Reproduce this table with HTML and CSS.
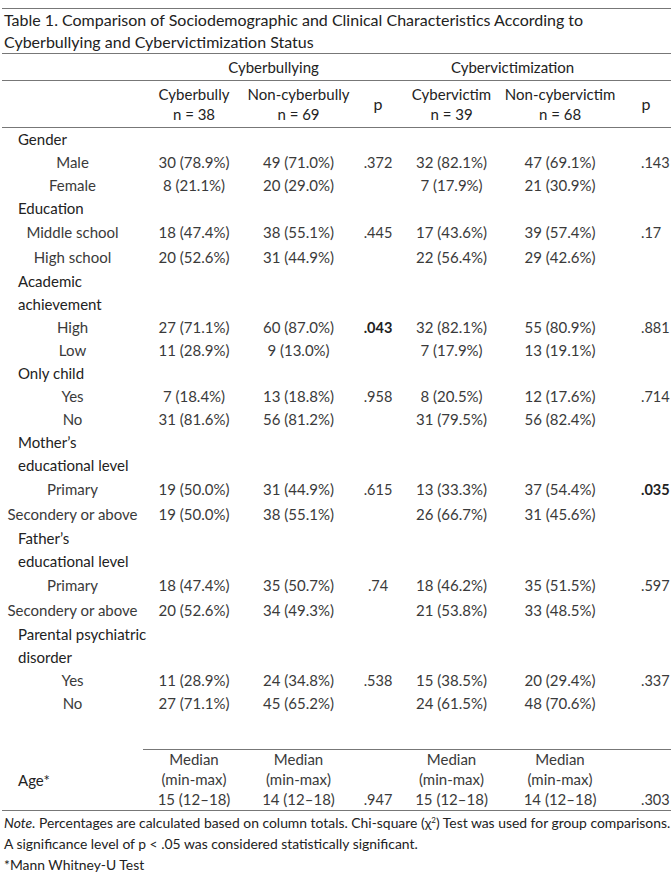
FILE: index.html
```html
<!DOCTYPE html>
<html lang="en">
<head>
    <meta charset="UTF-8">
    <meta name="viewport" content="width=device-width, initial-scale=1.0">
    <title>Table 1</title>
    <link rel="stylesheet" href="styles.css">
</head>
<body>

<div class="table-box">
    <div class="table-title">Table 1. Comparison of Sociodemographic and Clinical Characteristics According to<br>Cyberbullying and Cybervictimization Status</div>

    <table class="stats">
        <colgroup>
            <col class="c-label">
            <col class="c-g1">
            <col class="c-g2">
            <col class="c-p1">
            <col class="c-g3">
            <col class="c-g4">
            <col class="c-p2">
        </colgroup>
        <thead>
            <tr class="group-row">
                <th></th>
                <th colspan="3">Cyberbullying</th>
                <th colspan="2">Cybervictimization</th>
                <th></th>
            </tr>
            <tr class="sub-row">
                <th></th>
                <th>Cyberbully<br>n = 38</th>
                <th>Non-cyberbully<br>n = 69</th>
                <th class="p-head">p</th>
                <th>Cybervictim<br>n = 39</th>
                <th>Non-cybervictim<br>n = 68</th>
                <th class="p-head">p</th>
            </tr>
        </thead>
        <tbody>
            <tr class="cat first"><td colspan="7">Gender</td></tr>
            <tr>
                <td class="sub">Male</td>
                <td>30 (78.9%)</td><td>49 (71.0%)</td><td class="pv">.372</td>
                <td>32 (82.1%)</td><td>47 (69.1%)</td><td class="pv last">.143</td>
            </tr>
            <tr>
                <td class="sub">Female</td>
                <td>8 (21.1%)</td><td>20 (29.0%)</td><td class="pv"></td>
                <td>7 (17.9%)</td><td>21 (30.9%)</td><td class="pv last"></td>
            </tr>

            <tr class="cat"><td colspan="7">Education</td></tr>
            <tr class="tall">
                <td class="sub">Middle school</td>
                <td>18 (47.4%)</td><td>38 (55.1%)</td><td class="pv">.445</td>
                <td>17 (43.6%)</td><td>39 (57.4%)</td><td class="pv last">.17</td>
            </tr>
            <tr class="tall">
                <td class="sub">High school</td>
                <td>20 (52.6%)</td><td>31 (44.9%)</td><td class="pv"></td>
                <td>22 (56.4%)</td><td>29 (42.6%)</td><td class="pv last"></td>
            </tr>

            <tr class="cat"><td colspan="7">Academic<br>achievement</td></tr>
            <tr>
                <td class="sub">High</td>
                <td>27 (71.1%)</td><td>60 (87.0%)</td><td class="pv sig">.043</td>
                <td>32 (82.1%)</td><td>55 (80.9%)</td><td class="pv last">.881</td>
            </tr>
            <tr>
                <td class="sub">Low</td>
                <td>11 (28.9%)</td><td>9 (13.0%)</td><td class="pv"></td>
                <td>7 (17.9%)</td><td>13 (19.1%)</td><td class="pv last"></td>
            </tr>

            <tr class="cat"><td colspan="7">Only child</td></tr>
            <tr>
                <td class="sub">Yes</td>
                <td>7 (18.4%)</td><td>13 (18.8%)</td><td class="pv">.958</td>
                <td>8 (20.5%)</td><td>12 (17.6%)</td><td class="pv last">.714</td>
            </tr>
            <tr>
                <td class="sub">No</td>
                <td>31 (81.6%)</td><td>56 (81.2%)</td><td class="pv"></td>
                <td>31 (79.5%)</td><td>56 (82.4%)</td><td class="pv last"></td>
            </tr>

            <tr class="cat"><td colspan="7">Mother’s<br>educational level</td></tr>
            <tr class="tall">
                <td class="sub">Primary</td>
                <td>19 (50.0%)</td><td>31 (44.9%)</td><td class="pv">.615</td>
                <td>13 (33.3%)</td><td>37 (54.4%)</td><td class="pv last sig">.035</td>
            </tr>
            <tr class="tall">
                <td class="sub">Secondery or above</td>
                <td>19 (50.0%)</td><td>38 (55.1%)</td><td class="pv"></td>
                <td>26 (66.7%)</td><td>31 (45.6%)</td><td class="pv last"></td>
            </tr>

            <tr class="cat"><td colspan="7">Father’s<br>educational level</td></tr>
            <tr class="tall">
                <td class="sub">Primary</td>
                <td>18 (47.4%)</td><td>35 (50.7%)</td><td class="pv">.74</td>
                <td>18 (46.2%)</td><td>35 (51.5%)</td><td class="pv last">.597</td>
            </tr>
            <tr class="tall">
                <td class="sub">Secondery or above</td>
                <td>20 (52.6%)</td><td>34 (49.3%)</td><td class="pv"></td>
                <td>21 (53.8%)</td><td>33 (48.5%)</td><td class="pv last"></td>
            </tr>

            <tr class="cat"><td colspan="7">Parental psychiatric<br>disorder</td></tr>
            <tr>
                <td class="sub">Yes</td>
                <td>11 (28.9%)</td><td>24 (34.8%)</td><td class="pv">.538</td>
                <td>15 (38.5%)</td><td>20 (29.4%)</td><td class="pv last">.337</td>
            </tr>
            <tr>
                <td class="sub">No</td>
                <td>27 (71.1%)</td><td>45 (65.2%)</td><td class="pv"></td>
                <td>24 (61.5%)</td><td>48 (70.6%)</td><td class="pv last"></td>
            </tr>

            <tr class="spacer"><td colspan="7"></td></tr>

            <tr class="age-row top">
                <td class="cat age" rowspan="3">Age*</td>
                <td>Median</td><td>Median</td><td></td>
                <td>Median</td><td>Median</td><td></td>
            </tr>
            <tr class="age-row">
                <td>(min-max)</td><td>(min-max)</td><td></td>
                <td>(min-max)</td><td>(min-max)</td><td></td>
            </tr>
            <tr class="age-row bottom">
                <td>15 (12–18)</td><td>14 (12–18)</td><td class="pv">.947</td>
                <td>15 (12–18)</td><td>14 (12–18)</td><td class="pv last">.303</td>
            </tr>
        </tbody>
    </table>

    <div class="table-note">
        <p><em>Note.</em> Percentages are calculated based on column totals. Chi-square (χ<sup>2</sup>) Test was used for group comparisons.</p>
        <p>A significance level of p &lt; .05 was considered statistically significant.</p>
        <p>*Mann Whitney-U Test</p>
    </div>
</div>

</body>
</html>
```

FILE: styles.css
```css
body {
    margin: 0;
    background-color: #fff;
    font-family: Lato, "Open Sans", sans-serif;
    color: #333;
}
.table-box {
    margin: 8px 0 0 2px;
    border-top: 1px solid #777;
    border-bottom: 1px solid #777;
}
.table-title {
    padding: 0 0 0 2px;
    font-size: 16px;
    line-height: 22px;
    color: #222;
    border-bottom: 1px solid #777;
}
.stats {
    width: 669px;
    border-collapse: collapse;
    table-layout: fixed;
    font-size: 15px;
}
.c-label { width: 141px; }
.c-g1 { width: 102px; }
.c-g2 { width: 107px; }
.c-p1 { width: 52px; }
.c-g3 { width: 95px; }
.c-g4 { width: 122px; }
.c-p2 { width: 50px; }

.stats th {
    font-weight: normal;
    color: #222;
    padding: 0;
    text-align: center;
}
.stats td {
    padding: 0;
    text-align: center;
    line-height: 23px;
    color: #3a3a3a;
}
.group-row th {
    height: 26px;
    border-bottom: 1px solid #777;
}
.sub-row th {
    line-height: 20px;
    height: 46px;
    border-bottom: 1px solid #777;
}
.p-head {
    font-size: 16px;
}
.stats .cat td,
.stats td.cat {
    text-align: left;
    padding-left: 16px;
    color: #222;
}
.tall td {
    height: 25px;
}
.pv {
    font-size: 14.5px;
}
.stats td.last {
    text-align: left;
    padding-left: 20px;
}
.stats td.sig {
    font-weight: bold;
    color: #222;
}
.spacer td {
    height: 34px;
}
.stats .age-row td {
    height: 20px;
    line-height: 20px;
}
.stats .age-row.top td {
    border-top: 1px solid #777;
    height: 19px;
    line-height: 19px;
}
.stats .age-row.bottom td {
    height: 21px;
    line-height: 21px;
}
.stats .age-row.top td.age {
    border-top: none;
    vertical-align: middle;
    line-height: 20px;
}
.table-note {
    border-top: 1px solid #777;
    padding: 1px 0 1px 2px;
    font-size: 13.9px;
    line-height: 21px;
    color: #222;
}
.table-note p {
    margin: 0;
}
.table-note sup {
    font-size: 8px;
    vertical-align: 5px;
    line-height: 0;
}
```
